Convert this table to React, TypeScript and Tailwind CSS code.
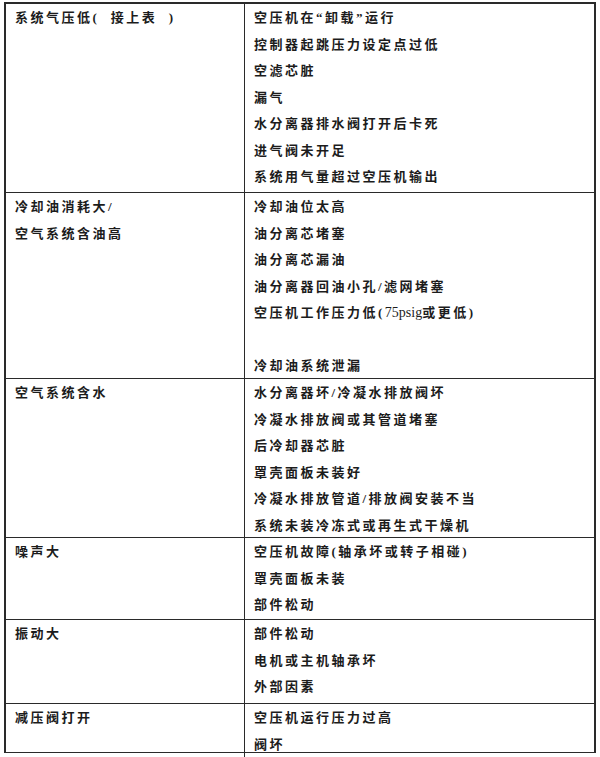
const rows: { left: string[]; right: string[]; h: string }[] = [
  {
    left: ['系统气压低(\u00a0 接上表\u00a0 )'],
    right: [
      '空压机在“卸载”运行',
      '控制器起跳压力设定点过低',
      '空滤芯脏',
      '漏气',
      '水分离器排水阀打开后卡死',
      '进气阀未开足',
      '系统用气量超过空压机输出',
    ],
    h: 'h-[189px]',
  },
  {
    left: ['冷却油消耗大/', '空气系统含油高'],
    right: [
      '冷却油位太高',
      '油分离芯堵塞',
      '油分离芯漏油',
      '油分离器回油小孔/滤网堵塞',
      '空压机工作压力低(75psig或更低)',
      '',
      '冷却油系统泄漏',
    ],
    h: 'h-[186px]',
  },
  {
    left: ['空气系统含水'],
    right: [
      '水分离器坏/冷凝水排放阀坏',
      '冷凝水排放阀或其管道堵塞',
      '后冷却器芯脏',
      '罩壳面板未装好',
      '冷凝水排放管道/排放阀安装不当',
      '系统未装冷冻式或再生式干燥机',
    ],
    h: 'h-[159px]',
  },
  {
    left: ['噪声大'],
    right: ['空压机故障(轴承坏或转子相碰)', '罩壳面板未装', '部件松动'],
    h: 'h-[82px]',
  },
  {
    left: ['振动大'],
    right: ['部件松动', '电机或主机轴承坏', '外部因素'],
    h: 'h-[84px]',
  },
  {
    left: ['减压阀打开'],
    right: ['空压机运行压力过高', '阀坏'],
    h: 'h-[48px]',
  },
];

// latin runs in the scan are set tight, CJK is spaced out
function Line({ text }: { text: string }) {
  const parts = text.split(/([A-Za-z0-9]+)/);
  return (
    <div className="h-[26.5px] leading-[26.5px] text-[13px] tracking-[2.5px] font-semibold whitespace-nowrap">
      {parts.map((p, k) =>
        /^[A-Za-z0-9]+$/.test(p) ? (
          <span key={k} className="text-[14px] tracking-normal font-normal">
            {p}
          </span>
        ) : (
          <span key={k}>{p}</span>
        ),
      )}
    </div>
  );
}

export default function App() {
  return (
    <div className="w-[600px] h-[757px] bg-white pt-[2px] pl-[4px] text-[#1c1c1c] [font-family:'Liberation_Serif','Noto_Sans_CJK_SC',serif]">
      <div className="w-[592px] border-2 border-[#2a2a2a] border-b-[1.5px]">
        {rows.map((row, i) => (
          <div
            key={i}
            className={`${row.h} grid grid-cols-[239px_1fr] ${i < rows.length - 1 ? 'border-b-[1.5px] border-[#2a2a2a]' : ''}`}
          >
            <div className="border-r-[1.5px] border-[#2a2a2a] pl-[9px] pt-[1px]">
              {row.left.map((t, j) => (
                <Line key={j} text={t} />
              ))}
            </div>
            <div className="pl-[9px] pt-[1px]">
              {row.right.map((t, j) => (
                <Line key={j} text={t} />
              ))}
            </div>
          </div>
        ))}
      </div>
    </div>
  );
}
